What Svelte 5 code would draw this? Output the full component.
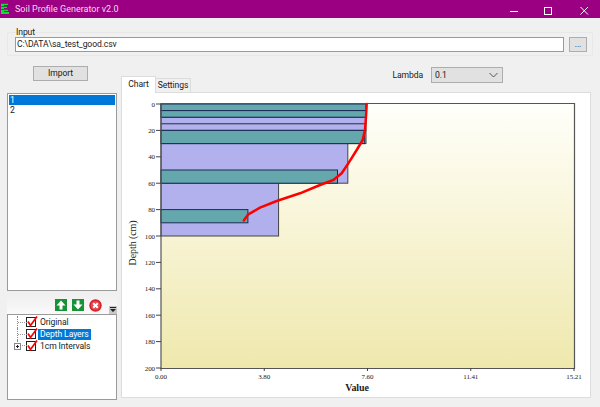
<script>
    const sx = (v) => 161 + (v / 15.21) * 413
    const sy = (d) => 104 + (d / 200) * 264

    // [top, bottom, value]
    const purple = [
        [0, 5, 7.55], [5, 10, 7.55], [10, 15, 7.55], [15, 20, 7.55],
        [20, 30, 7.55], [30, 60, 6.88], [60, 100, 4.33],
    ]
    const teal = [
        [0, 5, 7.55], [5, 10, 7.55], [20, 30, 7.5], [50, 60, 6.5], [80, 90, 3.2],
    ]
    const depthTicks = [0, 20, 40, 60, 80, 100, 120, 140, 160, 180, 200]
    const valueTicks = ["0.00", "3.80", "7.60", "11.41", "15.21"]

    const curve = "M366.7 104 L366 116.7 L365 130 L362.7 140 L356.7 150 L348.3 163.3 L341.7 173.3 L333.3 180 L320 185 L300 193.3 L276.7 201 L260 207.7 L248.3 214.3 L243.8 220.5"
</script>

<div class="window">
    <header class="titlebar">
        <svg class="appicon" width="9" height="11" viewBox="0 0 9 11">
            <path d="M0 0h7v2H3v1h3v2H3v1h4v2H3v1h5v2H0z" fill="#14d83c" />
            <path d="M0 0h7v1H0zM0 3h6v1H0zM0 6h7v1H0z" fill="#0b7a2a" />
        </svg>
        <span class="apptitle">Soil Profile Generator v2.0</span>
        <div class="winbtns">
            <svg width="12" height="12" viewBox="0 0 12 12"><path d="M3 8.500h8" stroke="#fff" /></svg>
            <svg width="12" height="12" viewBox="0 0 12 12"><rect x="1.500" y="4.500" width="7" height="7" fill="none" stroke="#fff" /></svg>
            <svg width="12" height="12" viewBox="0 0 12 12"><path d="M1.500 4l7.500 7.500M9 4l-7.500 7.500" stroke="#fff" /></svg>
        </div>
    </header>

    <div class="content">
        <fieldset class="inputgroup">
            <legend>Input</legend>
            <div class="pathrow">
                <div class="textbox">C:\DATA\sa_test_good.csv</div>
                <div class="btn browse">...</div>
            </div>
        </fieldset>

        <div class="main">
            <aside class="left">
                <div class="btn import">Import</div>
                <ul class="list">
                    <li class="selected">1</li>
                    <li>2</li>
                </ul>
                <div class="toolbar">
                    <span class="tool green">
                        <svg width="12" height="12" viewBox="0 0 12 12"><path d="M6 1.500L1.500 6.500h3V10.500h3V6.500h3z" fill="#fff" /></svg>
                    </span>
                    <span class="tool green">
                        <svg width="12" height="12" viewBox="0 0 12 12"><path d="M6 10.500L1.500 5.500h3V1.500h3v4h3z" fill="#fff" /></svg>
                    </span>
                    <svg class="remove" width="13" height="13" viewBox="0 0 13 13">
                        <circle cx="6.500" cy="6.500" r="6.200" fill="#d3222c" />
                        <circle cx="6.500" cy="6.500" r="4.600" fill="#e8474d" />
                        <path d="M4.200 4.200l4.600 4.600M8.800 4.200l-4.600 4.600" stroke="#fff" stroke-width="2" />
                    </svg>
                    <span class="overflow">
                        <svg width="6" height="6" viewBox="0 0 6 6"><path d="M0 0h6v1H0zM0 2h6L3 5z" fill="#222" /></svg>
                    </span>
                </div>
                <div class="tree">
                    <div class="node">
                        <span class="lines"></span>
                        <svg class="check" width="13" height="12" viewBox="0 0 13 12"><rect x="0.500" y="1.500" width="9" height="9" fill="#fff" stroke="#222" /><path d="M2 5.500l2.500 4L11 0.500" fill="none" stroke="#f00" stroke-width="1.700" /></svg>
                        <span class="nodelabel">Original</span>
                    </div>
                    <div class="node">
                        <span class="lines"></span>
                        <svg class="check" width="13" height="12" viewBox="0 0 13 12"><rect x="0.500" y="1.500" width="9" height="9" fill="#fff" stroke="#222" /><path d="M2 5.500l2.500 4L11 0.500" fill="none" stroke="#f00" stroke-width="1.700" /></svg>
                        <span class="nodelabel active">Depth Layers</span>
                    </div>
                    <div class="node">
                        <span class="lines last"><span class="expander"></span></span>
                        <svg class="check" width="13" height="12" viewBox="0 0 13 12"><rect x="0.500" y="1.500" width="9" height="9" fill="#fff" stroke="#222" /><path d="M2 5.500l2.500 4L11 0.500" fill="none" stroke="#f00" stroke-width="1.700" /></svg>
                        <span class="nodelabel">1cm Intervals</span>
                    </div>
                </div>
            </aside>

            <section class="right">
                <div class="lambda">
                    <span>Lambda</span>
                    <div class="combo">
                        <span>0.1</span>
                        <svg width="9" height="6" viewBox="0 0 9 6"><path d="M0.500 1l4 4 4-4" fill="none" stroke="#555" /></svg>
                    </div>
                </div>
                <div class="tabs">
                    <div class="tab current">Chart</div>
                    <div class="tab">Settings</div>
                </div>
                <div class="panel">
                    <svg class="chart" width="468" height="304" viewBox="122 93 468 304">
                        <defs>
                            <linearGradient id="plotbg" x1="0" y1="0" x2="0" y2="1">
                                <stop offset="0" stop-color="#fffffa" />
                                <stop offset="1" stop-color="#efe8ad" />
                            </linearGradient>
                        </defs>
                        <rect x={sx(0)} y={sy(0)} width="413" height="264" fill="url(#plotbg)" />

                        {#each purple as [a, b, v]}
                            <rect x={sx(0)} y={sy(a)} width={sx(v) - sx(0)} height={sy(b) - sy(a)} fill="#aaa8ee" fill-opacity="0.9" stroke="#444" stroke-width="1" />
                        {/each}
                        {#each teal as [a, b, v]}
                            <rect x={sx(0)} y={sy(a)} width={sx(v) - sx(0)} height={sy(b) - sy(a)} fill="#64a8ae" stroke="#1b2a55" stroke-width="1" />
                        {/each}

                        <path d={curve} fill="none" stroke="#f00" stroke-width="2.500" stroke-linecap="round" stroke-linejoin="round" />

                        <path d="M161 103.500V368.500H574.500V103.500H161" fill="none" stroke="#555" stroke-width="1.200" />

                        {#each depthTicks as d}
                            <line x1="156" x2="161" y1={sy(d)} y2={sy(d)} stroke="#444" />
                            <text class="tick" x="155" y={sy(d) + 2.500} text-anchor="end">{d}</text>
                        {/each}
                        {#each valueTicks as t, i}
                            <line x1={161 + i * 103.250} x2={161 + i * 103.250} y1="368" y2="371" stroke="#444" />
                            <text class="tick" x={161 + i * 103.250} y="378.500" text-anchor="middle">{t}</text>
                        {/each}

                        <text class="axis bold" x="357" y="391" text-anchor="middle">Value</text>
                        <text class="axis" transform="translate(135.500 243) rotate(-90)" text-anchor="middle">Depth (cm)</text>
                    </svg>
                </div>
            </section>
        </div>
    </div>
</div>

<style>
    :global(body) {
        margin: 0;
        background: #f0f0f0;
    }
    .window {
        width: 600px;
        height: 407px;
        overflow: hidden;
        font-family: Roboto, "Liberation Sans", sans-serif;
        font-size: 8.600px;
        letter-spacing: -0.1px;
        color: #1a1a1a;
        background: #f0f0f0;
    }
    .titlebar {
        height: 18px;
        background: #9b0082;
        display: flex;
        align-items: center;
        color: #f3dcef;
        box-sizing: border-box;
        padding-left: 1px;
    }
    .appicon {
        margin-top: -1px;
    }
    .apptitle {
        margin-left: 5px;
        font-size: 9px;
        letter-spacing: 0;
    }
    .winbtns {
        margin-left: auto;
        display: flex;
        gap: 24px;
        padding-right: 9px;
    }
    .content {
        padding: 10px 7px 0 7px;
    }
    .inputgroup {
        margin: 0;
        padding: 1px 5px 3px 7px;
        height: 28px;
        box-sizing: border-box;
        border: 1px solid #e8e8e8;
        border-radius: 2px;
    }
    .inputgroup legend {
        padding: 0;
        margin-left: 1px;
        line-height: 8px;
    }
    .pathrow {
        display: flex;
        gap: 5px;
    }
    .textbox {
        flex: 1;
        height: 15px;
        box-sizing: border-box;
        background: #fff;
        border: 1px solid #9a9a9a;
        line-height: 13px;
        padding-left: 1px;
    }
    .btn {
        background: #e1e1e1;
        border: 1px solid #adadad;
        box-sizing: border-box;
        text-align: center;
    }
    .browse {
        width: 18px;
        height: 15px;
        line-height: 13px;
    }
    .main {
        display: flex;
        margin-top: 10px;
    }
    .left {
        width: 110px;
        display: flex;
        flex-direction: column;
    }
    .import {
        width: 55px;
        height: 15px;
        line-height: 13px;
        margin-left: 26px;
    }
    .list {
        list-style: none;
        margin: 12px 0 0;
        padding: 1px;
        height: 198px;
        box-sizing: border-box;
        background: #fff;
        border: 1px solid #9a9a9a;
    }
    .list li {
        height: 10px;
        line-height: 10px;
        padding-left: 1px;
    }
    .list li.selected {
        background: #0078d7;
        color: #fff;
    }
    .toolbar {
        margin-top: 5px;
        height: 18px;
        background: linear-gradient(#f0f0f0, #fafafa);
        display: flex;
        align-items: center;
        gap: 5px;
        padding-right: 15px;
        justify-content: flex-end;
        position: relative;
        box-sizing: border-box;
    }
    .tool {
        width: 12px;
        height: 12px;
        display: block;
    }
    .tool svg, .remove {
        display: block;
    }
    .green {
        background: #189236;
    }
    .overflow {
        position: absolute;
        right: 0;
        bottom: 0;
        width: 8px;
        height: 8px;
        background: #c8c8c8;
        display: flex;
        align-items: center;
        justify-content: center;
    }
    .tree {
        height: 86px;
        box-sizing: border-box;
        background: #fff;
        border: 1px solid #9a9a9a;
        padding-top: 1px;
    }
    .node {
        display: flex;
        align-items: center;
        height: 12px;
    }
    .lines {
        width: 10px;
        height: 12px;
        flex: none;
        position: relative;
        box-sizing: border-box;
        margin-left: 9px;
        border-left: 1px dotted #888;
        background: linear-gradient(to right, #999 50%, transparent 50%) 0 6px / 2px 1px repeat-x;
    }
    .lines.last {
        height: 6px;
        align-self: flex-start;
        background-position: 0 5px;
        border-left: 1px dotted #888;
    }
    .expander {
        position: absolute;
        left: -4px;
        top: 3px;
        width: 5px;
        height: 5px;
        border: 1px solid #888;
        background: linear-gradient(#222, #222) center / 3px 1px no-repeat,
            linear-gradient(#222, #222) center / 1px 3px no-repeat,
            #fff;
    }
    .check {
        flex: none;
        margin-left: -1px;
    }
    .nodelabel {
        padding: 0 2px;
        margin-left: -1px;
        line-height: 11px;
    }
    .nodelabel.active {
        background: #0078d7;
        color: #fff;
    }
    .right {
        flex: 1;
        margin-left: 4px;
        position: relative;
    }
    .lambda {
        position: absolute;
        top: 1px;
        right: 90px;
        display: flex;
        align-items: center;
        gap: 8px;
    }
    .combo {
        width: 72px;
        height: 16px;
        box-sizing: border-box;
        background: #e1e1e1;
        border: 1px solid #adadad;
        display: flex;
        align-items: center;
        justify-content: space-between;
        padding: 0 4px 0 3px;
    }
    .tabs {
        display: flex;
        height: 26px;
        align-items: flex-end;
    }
    .tab {
        height: 13px;
        line-height: 13px;
        width: 34px;
        box-sizing: content-box;
        text-align: center;
        background: #f0f0f0;
        border: 1px solid #dcdcdc;
        border-bottom: none;
        margin-left: -1px;
    }
    .tab.current {
        height: 16px;
        width: 33px;
        line-height: 15px;
        background: #fff;
        margin-left: 0;
        position: relative;
        z-index: 1;
        margin-bottom: -1px;
    }
    .panel {
        width: 470px;
        height: 306px;
        box-sizing: border-box;
        background: #fff;
        border: 1px solid #dcdcdc;
    }
    .chart {
        display: block;
    }
    .tick {
        font-family: "Liberation Serif", "Times New Roman", serif;
        font-size: 7px;
        fill: #222;
    }
    .axis {
        font-family: "Liberation Serif", "Times New Roman", serif;
        font-size: 10px;
        fill: #222;
    }
    .bold {
        font-weight: bold;
    }
</style>
